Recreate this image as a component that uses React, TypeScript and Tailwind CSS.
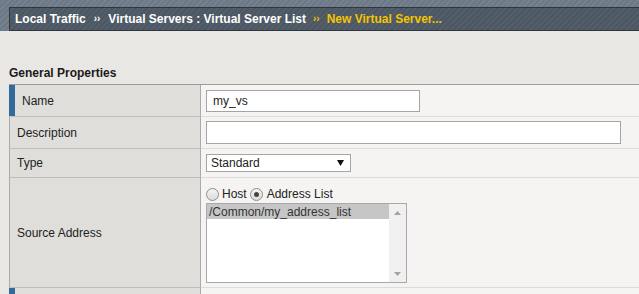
import React from "react";

function Radio({ checked }: { checked?: boolean }) {
  return (
    <span className="inline-flex w-[13px] h-[13px] rounded-full border border-[#8d8d8d] bg-[linear-gradient(#f4f4f4,#dcdcdc)] items-center justify-center shrink-0">
      {checked ? <span className="w-[5px] h-[5px] rounded-full bg-[#444]" /> : null}
    </span>
  );
}

export default function App() {
  return (
    <div className="w-[639px] h-[294px] overflow-hidden bg-[#e9e7e3] text-[12px] leading-[14px] text-[#222]" style={{ fontFamily: '"Liberation Sans", Arial, sans-serif' }}>
      {/* header */}
      <div className="h-[31px] pt-[7px] pl-[9px] bg-[repeating-linear-gradient(135deg,#6c7885_0px,#6c7885_2px,#75818e_2px,#75818e_4px)]">
        <div className="h-[24px] border-y border-l border-[#2f363d] bg-[repeating-linear-gradient(135deg,#4c5763_0px,#4c5763_2px,#525e6a_2px,#525e6a_4px)] flex items-center pl-[5px] font-bold whitespace-nowrap">
          <span className="text-white">Local Traffic</span>
          <span className="text-white text-[10px] mx-[8px]">››</span>
          <span className="text-white">Virtual Servers : Virtual Server List</span>
          <span className="text-[#f5c400] text-[10px] mx-[7px]">››</span>
          <span className="text-[#f5c400]">New Virtual Server...</span>
        </div>
      </div>

      <div className="pt-[35px] pl-[9px]">
        <div className="font-bold text-[#1a1a1a] h-[18px]">General Properties</div>
        <div className="border-t border-[#9c9c9c] w-[640px]">
          {/* Name */}
          <div className="flex h-[32px]">
            <div className="w-[192px] shrink-0 flex items-center border-r border-[#a9a9a9] border-b border-b-[#bdbdbc] bg-[#dfdedb]">
              <div className="w-[6px] self-stretch bg-[#336a9c]" />
              <span className="pl-[7px]">Name</span>
            </div>
            <div className="flex-1 flex items-center pl-[5px] bg-[#f5f4f2] border-b border-[#dddcda]">
              <div className="w-[214px] h-[22px] border border-[#a5a5a5] bg-white flex items-center pl-[6px]">my_vs</div>
            </div>
          </div>
          {/* Description */}
          <div className="flex h-[32px]">
            <div className="w-[192px] shrink-0 flex items-center border-l border-[#a9a9a9] border-r border-b border-b-[#bdbdbc] bg-[#dfdedb] pl-[7px]">
              Description
            </div>
            <div className="flex-1 flex items-center pl-[5px] bg-[#f5f4f2] border-b border-[#dddcda]">
              <div className="w-[415px] h-[23px] border border-[#a5a5a5] bg-white" />
            </div>
          </div>
          {/* Type */}
          <div className="flex h-[29px]">
            <div className="w-[192px] shrink-0 flex items-center border-l border-[#a9a9a9] border-r border-b border-b-[#bdbdbc] bg-[#dfdedb] pl-[7px]">
              Type
            </div>
            <div className="flex-1 flex items-center pl-[5px] bg-[#f5f4f2] border-b border-[#dddcda]">
              <div className="w-[145px] h-[18px] border border-[#a5a5a5] bg-white flex items-center justify-between pl-[4px] pr-[6px]">
                <span>Standard</span>
                <svg width="7" height="6" viewBox="0 0 7 6"><path d="M0 0H7L3.5 6Z" fill="#111" /></svg>
              </div>
            </div>
          </div>
          {/* Source Address */}
          <div className="flex h-[110px]">
            <div className="w-[192px] shrink-0 flex items-center border-l border-[#a9a9a9] border-r border-b border-b-[#bdbdbc] bg-[#dfdedb] pl-[7px]">
              Source Address
            </div>
            <div className="flex-1 flex flex-col pl-[5px] pt-[8px] bg-[#f5f4f2] border-b border-[#dddcda]">
              <div className="flex items-center h-[16px]">
                <Radio />
                <span className="ml-[3px] mr-[3px]">Host</span>
                <Radio checked />
                <span className="ml-[4px]">Address List</span>
              </div>
              <div className="mt-[1px] w-[201px] h-[80px] border border-[#a9a9a9] bg-white flex">
                <div className="flex-1">
                  <div className="h-[15px] bg-[#c6c6c6] pl-[2px] text-[#333] flex items-center">/Common/my_address_list</div>
                </div>
                <div className="w-[17px] bg-[#f0f0f0] flex flex-col items-center justify-between pt-[7px] pb-[6px]">
                  <svg width="7" height="4" viewBox="0 0 7 4"><path d="M0 4H7L3.5 0Z" fill="#a3a3a3" /></svg>
                  <svg width="7" height="4" viewBox="0 0 7 4"><path d="M0 0H7L3.5 4Z" fill="#a3a3a3" /></svg>
                </div>
              </div>
            </div>
          </div>
          {/* next row */}
          <div className="flex h-[20px]">
            <div className="w-[192px] shrink-0 flex border-r border-[#a9a9a9] bg-[#dfdedb]">
              <div className="w-[6px] bg-[#336a9c]" />
            </div>
            <div className="flex-1 bg-[#f5f4f2]" />
          </div>
        </div>
      </div>
    </div>
  );
}
